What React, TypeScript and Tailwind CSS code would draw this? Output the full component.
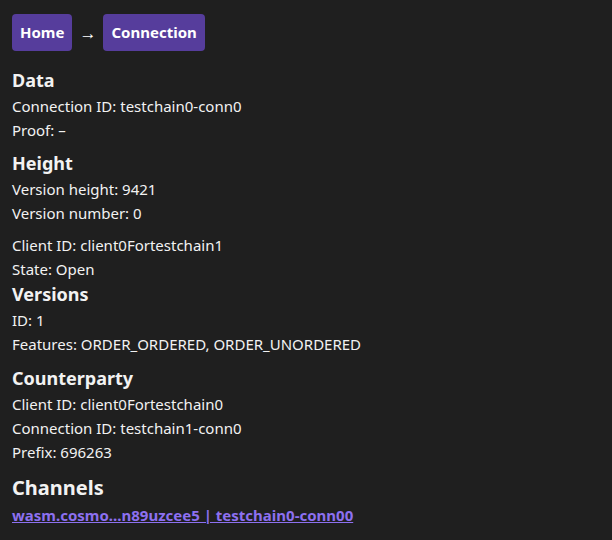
const font = { fontFamily: '"Noto Sans", "Open Sans", sans-serif' }

function Line({ children }: { children: React.ReactNode }) {
  return <p className="leading-[24px]">{children}</p>
}

function Heading({ children }: { children: React.ReactNode }) {
  return <h3 className="text-[18px] font-bold leading-[27px]">{children}</h3>
}

export default function App() {
  return (
    <main
      className="min-h-[540px] bg-[#1f1f1f] text-[#f2f2f2] text-[15px] px-3 py-[14px]"
      style={font}
    >
      <nav className="flex items-center gap-[7px] mb-[16px]">
        <a className="bg-[#563d9c] text-white font-bold rounded px-2 h-[37px] flex items-center">
          Home
        </a>
        <span className="text-white text-[17px]">→</span>
        <a className="bg-[#563d9c] text-white font-bold rounded px-2 h-[37px] flex items-center">
          Connection
        </a>
      </nav>

      <section className="mb-2">
        <Heading>Data</Heading>
        <Line>Connection ID: testchain0-conn0</Line>
        <Line>Proof: –</Line>
      </section>

      <section className="mb-2">
        <Heading>Height</Heading>
        <Line>Version height: 9421</Line>
        <Line>Version number: 0</Line>
      </section>

      <section>
        <Line>Client ID: client0Fortestchain1</Line>
        <Line>State: Open</Line>
      </section>

      <section className="mb-[9px]">
        <Heading>Versions</Heading>
        <Line>ID: 1</Line>
        <Line>Features: ORDER_ORDERED, ORDER_UNORDERED</Line>
      </section>

      <section className="mb-[9px]">
        <Heading>Counterparty</Heading>
        <Line>Client ID: client0Fortestchain0</Line>
        <Line>Connection ID: testchain1-conn0</Line>
        <Line>Prefix: 696263</Line>
      </section>

      <section>
        <h3 className="text-[20px] font-bold leading-[30px]">Channels</h3>
        <a className="font-bold text-[#8d70f0] underline leading-[24px]" href="#">
          wasm.cosmo...n89uzcee5 | testchain0-conn00
        </a>
      </section>
    </main>
  )
}
